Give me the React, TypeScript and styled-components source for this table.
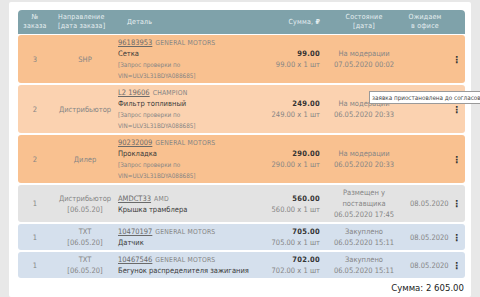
import styled, { createGlobalStyle } from "styled-components";

type Tone = "orange" | "peach" | "gray" | "blue";

const tones: Record<Tone, string> = {
  orange: "#f9c190",
  peach: "#fbd2b0",
  gray: "#e3e3e3",
  blue: "#d5e0ed",
};

interface Order {
  num: string;
  dir: string;
  dirDate?: string;
  code: string;
  brand: string;
  name: string;
  vin?: boolean;
  sum: string;
  status: string[];
  expect?: string;
  tone: Tone;
  tooltip?: string;
}

const orders: Order[] = [
  {
    num: "3",
    dir: "SHP",
    code: "96183953",
    brand: "GENERAL MOTORS",
    name: "Сетка",
    vin: true,
    sum: "99.00",
    status: ["На модерации", "07.05.2020 00:02"],
    tone: "orange",
  },
  {
    num: "2",
    dir: "Дистрибьютор",
    code: "L2 19606",
    brand: "CHAMPION",
    name: "Фильтр топливный",
    vin: true,
    sum: "249.00",
    status: ["На модерации", "06.05.2020 20:33"],
    tone: "peach",
    tooltip: "заявка приостановлена до согласования",
  },
  {
    num: "2",
    dir: "Дилер",
    code: "90232009",
    brand: "GENERAL MOTORS",
    name: "Прокладка",
    vin: true,
    sum: "290.00",
    status: ["На модерации", "06.05.2020 20:33"],
    tone: "orange",
  },
  {
    num: "1",
    dir: "Дистрибьютор",
    dirDate: "[06.05.20]",
    code: "AMDCT33",
    brand: "AMD",
    name: "Крышка трамблера",
    sum: "560.00",
    status: ["Размещен у", "поставщика", "06.05.2020 17:45"],
    expect: "08.05.2020",
    tone: "gray",
  },
  {
    num: "1",
    dir: "TXT",
    dirDate: "[06.05.20]",
    code: "10470197",
    brand: "GENERAL MOTORS",
    name: "Датчик",
    sum: "705.00",
    status: ["Закуплено", "06.05.2020 15:11"],
    expect: "08.05.2020",
    tone: "blue",
  },
  {
    num: "1",
    dir: "TXT",
    dirDate: "[06.05.20]",
    code: "10467546",
    brand: "GENERAL MOTORS",
    name: "Бегунок распределителя зажигания",
    sum: "702.00",
    status: ["Закуплено", "06.05.2020 15:11"],
    expect: "08.05.2020",
    tone: "blue",
  },
];

const GlobalStyle = createGlobalStyle`
  html, body {
    margin: 0;
    padding: 0;
    background: #e8e8e8;
    overflow: hidden;
  }
  body {
    font-family: "Liberation Sans Narrow", "DejaVu Sans Condensed", "Liberation Sans", sans-serif;
    color: #858585;
  }
`;

const Page = styled.div`
  width: 480px;
  height: 297px;
  padding: 2px 9px 0 9px;
  box-sizing: border-box;
`;

const Panel = styled.div`
  background: #fff;
  width: 462px;
  height: 295px;
  box-sizing: border-box;
  padding: 8px 6px 0 9px;
  border-radius: 2px;
`;

const cols = "34px 66px 150px 54px 84px 36px 23px";

const Head = styled.div`
  display: grid;
  grid-template-columns: ${cols};
  align-items: center;
  height: 24px;
  background: #7fa2aa;
  border-radius: 4px 4px 0 0;
  color: #e6eff1;
  font-size: 7px;
  line-height: 9px;
  letter-spacing: 0.2px;
`;

const HeadCell = styled.div<{ $align?: string; $pad?: string }>`
  text-align: ${({ $align }) => $align || "center"};
  padding: ${({ $pad }) => $pad || "0"};
`;

const Rows = styled.div`
  display: flex;
  flex-direction: column;
  gap: 2px;
  margin-top: 1px;
`;

const Row = styled.div<{ $tone: Tone }>`
  position: relative;
  display: grid;
  grid-template-columns: ${cols};
  align-items: center;
  padding: 2px 0;
  background: ${({ $tone }) => tones[$tone]};
  border-radius: 3px;
  font-size: 7.5px;
  line-height: 11px;
`;

const Cell = styled.div<{ $align?: string; $pad?: string }>`
  text-align: ${({ $align }) => $align || "center"};
  padding: ${({ $pad }) => $pad || "0"};
  white-space: nowrap;
`;

const Line = styled.div`
  height: 11px;
`;

const Brand = styled.span`
  font-size: 6.8px;
  line-height: 1;
  letter-spacing: 0.2px;
`;

const Code = styled.span`
  text-decoration: underline;
  color: #6a6a6a;
  margin-right: 3px;
`;

const Name = styled.div`
  color: #3a3a3a;
  height: 11px;
`;

const Vin = styled.div`
  font-size: 6.3px;
  line-height: 11px;
  height: 11px;
`;

const Total = styled.div`
  color: #333;
  font-weight: bold;
  letter-spacing: 0.3px;
`;

const Dots = styled.div`
  color: #333;
  font-weight: bold;
  font-size: 10px;
  line-height: 11px;
  text-align: center;
  padding-left: 6px;
`;

const Tooltip = styled.div`
  position: absolute;
  left: 351px;
  top: 6px;
  padding: 1px 2px;
  background: #fff;
  border: 1px solid #9a9a9a;
  color: #444;
  font-size: 6.3px;
  line-height: 9px;
  white-space: nowrap;
  z-index: 2;
`;

const Sum = styled.div`
  text-align: right;
  color: #222;
  font-size: 9.5px;
  margin-top: 4px;
  padding-right: 1px;
  font-family: "DejaVu Sans Condensed", "Liberation Sans Narrow", sans-serif;
`;

export default function App() {
  return (
    <Page>
      <GlobalStyle />
      <Panel>
        <Head>
          <HeadCell>
            №<br />
            заказа
          </HeadCell>
          <HeadCell $align="left" $pad="0 0 0 6px">
            Направление
            <br />
            [дата заказа]
          </HeadCell>
          <HeadCell $align="left" $pad="0 0 0 9px">
            Деталь
          </HeadCell>
          <HeadCell $align="right" $pad="0 2px 0 0">
            Сумма, <b>₽</b>
          </HeadCell>
          <HeadCell>
            Состояние
            <br />
            [дата]
          </HeadCell>
          <HeadCell $pad="0 0 0 2px">
            Ожидаем
            <br />в офисе
          </HeadCell>
          <HeadCell />
        </Head>
        <Rows>
          {orders.map((o, i) => (
            <Row key={i} $tone={o.tone}>
              <Cell>{o.num}</Cell>
              <Cell>
                {o.dir}
                {o.dirDate && (
                  <>
                    <br />
                    {o.dirDate}
                  </>
                )}
              </Cell>
              <Cell $align="left">
                <Line>
                  <Code>{o.code}</Code>
                  <Brand>{o.brand}</Brand>
                </Line>
                <Name>{o.name}</Name>
                {o.vin && (
                  <>
                    <Vin>[Запрос проверки по</Vin>
                    <Vin>VIN=ULV3L31BDYA088685]</Vin>
                  </>
                )}
              </Cell>
              <Cell $align="right" $pad="0 2px 0 0">
                <Total>{o.sum}</Total>
                {o.sum} x 1 шт
              </Cell>
              <Cell>
                {o.status.map((s, j) => (
                  <div key={j}>{s}</div>
                ))}
              </Cell>
              <Cell $pad="0 0 0 4px">{o.expect}</Cell>
              <Dots>⋮</Dots>
              {o.tooltip && <Tooltip>{o.tooltip}</Tooltip>}
            </Row>
          ))}
        </Rows>
        <Sum>Сумма: 2 605.00</Sum>
      </Panel>
    </Page>
  );
}
